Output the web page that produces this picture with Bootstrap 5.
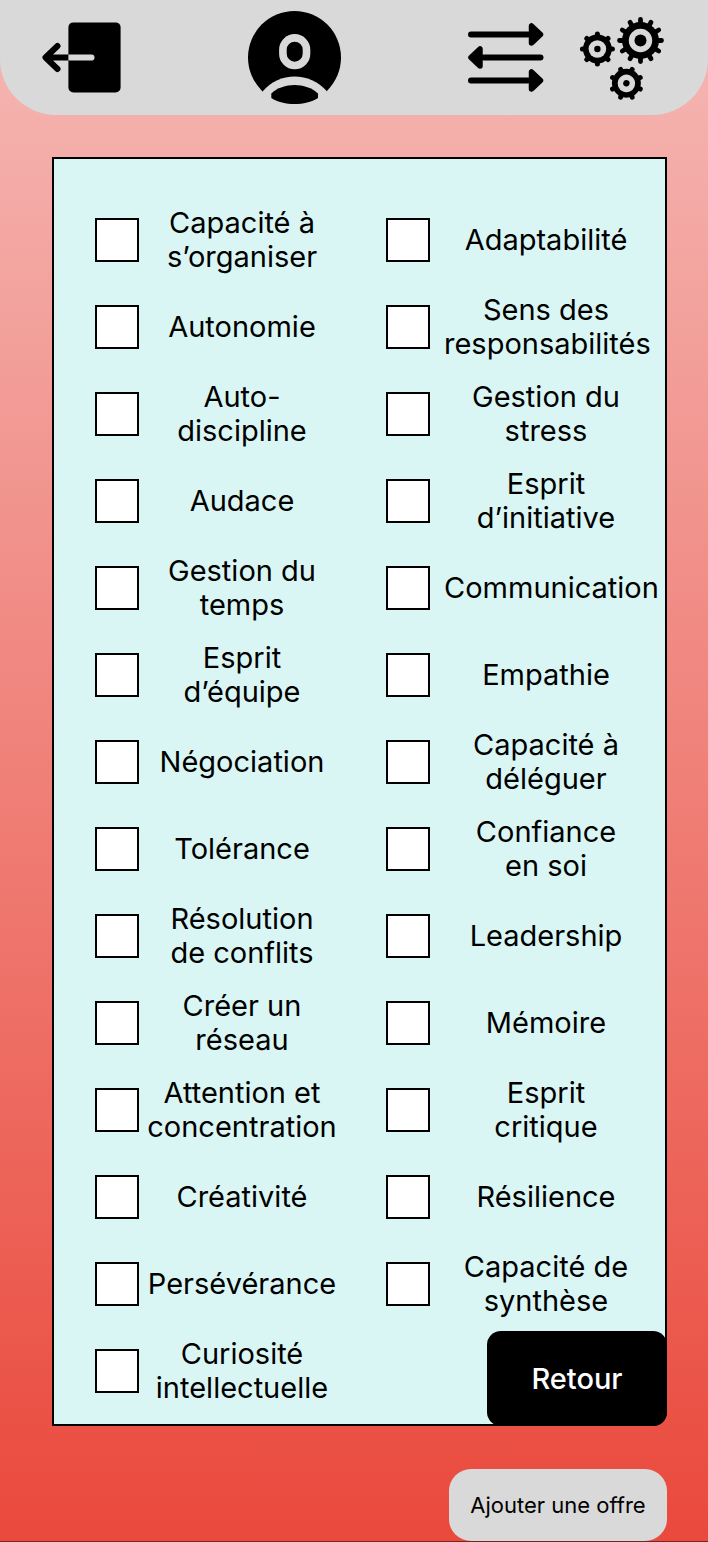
<!DOCTYPE html>
<html lang="fr">
<head>
<meta charset="utf-8">
<meta name="viewport" content="width=device-width, initial-scale=1">
<title>Compétences</title>
<link href="https://cdn.jsdelivr.net/npm/bootstrap@5.3.0/dist/css/bootstrap.min.css" rel="stylesheet">
<style>
  body {
    font-family: Inter, "Liberation Sans", sans-serif;
    color: #000;
    background: linear-gradient(180deg, #f5b8b5 0%, #ea493c 100%);
    min-height: 100vh;
    border-bottom: 1px solid #6b2a25;
  }
  .topbar { background: #d9d9d9; height: 115px; border-radius: 0 0 56px 56px; padding: 0 42px; }
  .topbar a { color: #000; line-height: 0; }
  .tools { gap: 36px; }
  .content { padding: 42px 41px 0 52px; }
  .panel { background: #daf6f4; border: 2px solid #000; border-bottom-right-radius: 14px; padding: 37px 0 10px 41px; }
  .skills { display: grid; grid-template-columns: minmax(0, 1fr) minmax(0, 1fr); column-gap: 12px; }
  .skill { height: 87px; }
  .skill input { appearance: none; width: 44px; height: 44px; background: #fff; border: 2px solid #000; margin: 0; flex: none; }
  .skill input:checked { background: #000; box-shadow: inset 0 0 0 6px #fff; }
  .skill label { flex: 1 1 0; min-width: 0; font-size: 29px; line-height: 34px; text-align: center; white-space: nowrap; }
  .first-col label { margin-right: 29px; }
  .second-col label { margin: 0 17px 0 14px; }
  .back { right: -2px; bottom: -2px; width: 180px; height: 95px; background: #000; color: #fff; border: 0; border-radius: 14px; font-size: 29px; font-weight: 500; }
  .offer { background: #d9d9d9; color: #000; border: 0; border-radius: 22px; width: 218px; height: 72px; margin-top: 43px; font-size: 22px; }
</style>
</head>
<body>
<header class="topbar d-flex align-items-center justify-content-between">
  <a href="#" aria-label="Quitter">
    <svg width="79" height="71" viewBox="0 0 79 71">
      <rect x="26.4" y=".4" width="52.2" height="70" rx="5"/>
      <path d="M26.4 35.5H4M15.500 24 3.500 35.500l12 11.500" fill="none" stroke="#000" stroke-width="6" stroke-linecap="round" stroke-linejoin="round"/>
      <path d="M26.4 32.4h23a3.100 3.100 0 0 1 0 6.200h-23z" fill="#d9d9d9"/>
    </svg>
  </a>
  <a href="#" aria-label="Profil">
    <svg width="93" height="93" viewBox="0 0 93 93">
      <circle cx="46.5" cy="46.5" r="46.5"/>
      <rect x="34.900" y="26.900" width="23.600" height="27.600" rx="11.800" fill="none" stroke="#d9d9d9" stroke-width="7.600"/>
      <path d="M15 80C31 60.500 62 60.500 78.700 80V93H15z" fill="#d9d9d9"/>
      <path d="M23.300 82.500C35 71 58 71 70 82.500V87C57 95 36 95 23.300 87z"/>
    </svg>
  </a>
  <div class="tools d-flex align-items-center">
    <a href="#" aria-label="Échanges">
      <svg width="76" height="72" viewBox="0 0 76 72" stroke="#000" stroke-linecap="round" stroke-linejoin="round">
        <path d="M3 12.500H60M16 35.500H72.500M3 58.500H60" stroke-width="6"/>
        <path d="M63.500 4V21L72.500 12.500zM12 27V44L3 35.500zM63.500 50V67L72.500 58.500z" stroke-width="5.500"/>
      </svg>
    </a>
    <a href="#" aria-label="Réglages">
      <svg width="86" height="86" viewBox="0 0 86 86" stroke="#000" stroke-linecap="round" fill="none">
        <defs>
          <g id="cog8">
            <path d="M0-15V15M-15 0H15M-10.600-10.600 10.600 10.600M-10.600 10.600 10.600-10.600" stroke-width="5"/>
            <circle r="14.400" fill="#000" stroke="none"/>
            <circle r="8.800" fill="#d9d9d9" stroke="none"/>
            <circle r="3.200" fill="#000" stroke="none"/>
          </g>
        </defs>
        <g transform="translate(60.500 25.500)">
          <path d="M0-21V21M-21 0H21M-10.500-18.200 10.500 18.200M-18.200-10.500 18.200 10.500M-18.200 10.500 18.200-10.500M-10.500 18.200 10.500-18.200" stroke-width="4.800"/>
          <circle r="18.500" fill="#000" stroke="none"/>
          <circle r="11.700" fill="#d9d9d9" stroke="none"/>
          <circle r="6" fill="#000" stroke="none"/>
        </g>
        <use href="#cog8" transform="translate(17.400 34)"/>
        <use href="#cog8" transform="translate(46.400 68.300) rotate(22.500)"/>
      </svg>
    </a>
  </div>
</header>

<main class="content">
  <form class="panel position-relative">
    <div class="skills">
      <div class="first-col">
        <div class="skill d-flex align-items-center"><input type="checkbox" id="a1"><label for="a1">Capacité à<br>s’organiser</label></div>
        <div class="skill d-flex align-items-center"><input type="checkbox" id="a2"><label for="a2">Autonomie</label></div>
        <div class="skill d-flex align-items-center"><input type="checkbox" id="a3"><label for="a3">Auto-<br>discipline</label></div>
        <div class="skill d-flex align-items-center"><input type="checkbox" id="a4"><label for="a4">Audace</label></div>
        <div class="skill d-flex align-items-center"><input type="checkbox" id="a5"><label for="a5">Gestion du<br>temps</label></div>
        <div class="skill d-flex align-items-center"><input type="checkbox" id="a6"><label for="a6">Esprit<br>d’équipe</label></div>
        <div class="skill d-flex align-items-center"><input type="checkbox" id="a7"><label for="a7">Négociation</label></div>
        <div class="skill d-flex align-items-center"><input type="checkbox" id="a8"><label for="a8">Tolérance</label></div>
        <div class="skill d-flex align-items-center"><input type="checkbox" id="a9"><label for="a9">Résolution<br>de conflits</label></div>
        <div class="skill d-flex align-items-center"><input type="checkbox" id="a10"><label for="a10">Créer un<br>réseau</label></div>
        <div class="skill d-flex align-items-center"><input type="checkbox" id="a11"><label for="a11">Attention et<br>concentration</label></div>
        <div class="skill d-flex align-items-center"><input type="checkbox" id="a12"><label for="a12">Créativité</label></div>
        <div class="skill d-flex align-items-center"><input type="checkbox" id="a13"><label for="a13">Persévérance</label></div>
        <div class="skill d-flex align-items-center"><input type="checkbox" id="a14"><label for="a14">Curiosité<br>intellectuelle</label></div>
      </div>
      <div class="second-col">
        <div class="skill d-flex align-items-center"><input type="checkbox" id="b1"><label for="b1">Adaptabilité</label></div>
        <div class="skill d-flex align-items-center"><input type="checkbox" id="b2"><label for="b2">Sens des<br>responsabilités</label></div>
        <div class="skill d-flex align-items-center"><input type="checkbox" id="b3"><label for="b3">Gestion du<br>stress</label></div>
        <div class="skill d-flex align-items-center"><input type="checkbox" id="b4"><label for="b4">Esprit<br>d’initiative</label></div>
        <div class="skill d-flex align-items-center"><input type="checkbox" id="b5"><label for="b5">Communication</label></div>
        <div class="skill d-flex align-items-center"><input type="checkbox" id="b6"><label for="b6">Empathie</label></div>
        <div class="skill d-flex align-items-center"><input type="checkbox" id="b7"><label for="b7">Capacité à<br>déléguer</label></div>
        <div class="skill d-flex align-items-center"><input type="checkbox" id="b8"><label for="b8">Confiance<br>en soi</label></div>
        <div class="skill d-flex align-items-center"><input type="checkbox" id="b9"><label for="b9">Leadership</label></div>
        <div class="skill d-flex align-items-center"><input type="checkbox" id="b10"><label for="b10">Mémoire</label></div>
        <div class="skill d-flex align-items-center"><input type="checkbox" id="b11"><label for="b11">Esprit<br>critique</label></div>
        <div class="skill d-flex align-items-center"><input type="checkbox" id="b12"><label for="b12">Résilience</label></div>
        <div class="skill d-flex align-items-center"><input type="checkbox" id="b13"><label for="b13">Capacité de<br>synthèse</label></div>
      </div>
    </div>
    <button type="button" class="back position-absolute">Retour</button>
  </form>
  <div class="d-flex justify-content-end">
    <button type="button" class="offer">Ajouter une offre</button>
  </div>
</main>
<script src="https://cdn.jsdelivr.net/npm/bootstrap@5.3.0/dist/js/bootstrap.bundle.min.js"></script>
</body>
</html>
